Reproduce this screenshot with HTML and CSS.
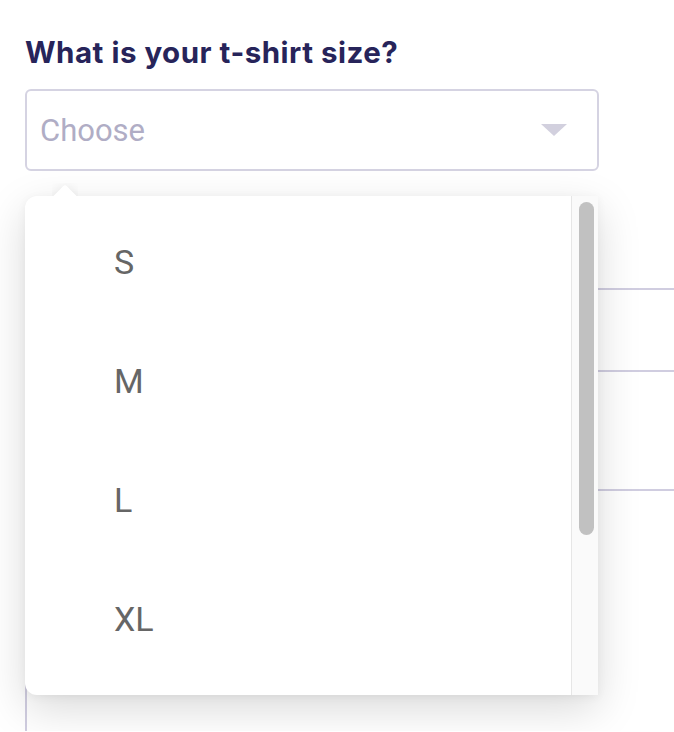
FILE: index.html
```html
<!DOCTYPE html>
<html>
<head>
<meta charset="utf-8">
<link rel="stylesheet" href="styles.css">
</head>
<body>
<div class="page">
  <h2 class="question">What is your t-shirt size?</h2>
  <div class="select-wrap">
    <div class="select">
      <span class="placeholder">Choose</span>
      <span class="arrow"></span>
    </div>
    <div class="dropdown">
      <div class="caret"></div>
      <div class="panel">
        <ul class="options">
          <li>S</li>
          <li>M</li>
          <li>L</li>
          <li>XL</li>
        </ul>
        <div class="track"><div class="thumb"></div></div>
      </div>
    </div>
  </div>
  <div class="fields">
    <div class="field f1"></div>
    <div class="field f2"></div>
    <div class="field f3"></div>
    <div class="box"></div>
  </div>
</div>
</body>
</html>
```
FILE: styles.css
```css
html, body {
  margin: 0;
  padding: 0;
  background: #ffffff;
}
.page {
  padding: 35px 0 0 25px;
  font-family: Roboto, "Liberation Sans", sans-serif;
}
.question {
  margin: 0;
  font-family: Inter, "Liberation Sans", sans-serif;
  font-weight: 700;
  font-size: 29.5px;
  line-height: 34px;
  letter-spacing: 0.5px;
  color: #27245a;
}
.select-wrap {
  position: relative;
  margin-top: 20px;
  width: 574px;
}
.select {
  box-sizing: border-box;
  height: 82px;
  border: 2px solid #d5d3e2;
  border-radius: 6px;
  background: #fff;
  display: flex;
  align-items: center;
  padding: 0 30px 0 13px;
  justify-content: space-between;
}
.placeholder {
  font-size: 31px;
  color: #b0adc5;
}
.arrow {
  width: 0;
  height: 0;
  border-left: 13px solid transparent;
  border-right: 13px solid transparent;
  border-top: 12px solid #d2d0de;
}
.fields {
  display: flex;
  flex-direction: column;
}
.field {
  height: 0;
  border-bottom: 2px solid #d0cde0;
  margin-right: -10px;
}
.f1 { margin-top: 117px; }
.f2 { margin-top: 80px; }
.f3 { margin-top: 117px; }
.box {
  margin-top: 120px;
  height: 120px;
  width: 572px;
  border-left: 2px solid #d0cde0;
}
.dropdown {
  position: absolute;
  left: 0;
  top: 107px;
  width: 573px;
  z-index: 10;
}
.caret {
  position: absolute;
  left: 27px;
  top: -13px;
  width: 26px;
  height: 13px;
  overflow: hidden;
}
.caret::before {
  content: "";
  position: absolute;
  left: 4px;
  top: 5px;
  width: 18px;
  height: 18px;
  background: #fff;
  transform: rotate(45deg);
  border-radius: 3px;
  box-shadow: 0 0 12px rgba(0,0,0,0.08);
}
.panel {
  display: flex;
  height: 499px;
  background: #fff;
  border-radius: 12px 0 0 12px;
  box-shadow: 0 14px 44px rgba(0, 0, 0, 0.15), 0 2px 10px rgba(0,0,0,0.05);
  overflow: hidden;
}
.options {
  list-style: none;
  margin: 0;
  padding: 6px 0 0 0;
  flex: 1;
}
.options li {
  height: 119px;
  display: flex;
  align-items: center;
  padding-left: 89px;
  font-size: 34px;
  color: #666666;
}
.track {
  width: 27px;
  border-left: 1px solid #e6e6e6;
  background: #fafafa;
  padding: 6px 5px 0 7px;
  box-sizing: border-box;
}
.thumb {
  width: 15px;
  height: 333px;
  border-radius: 8px;
  background: #c1c1c1;
}
```
